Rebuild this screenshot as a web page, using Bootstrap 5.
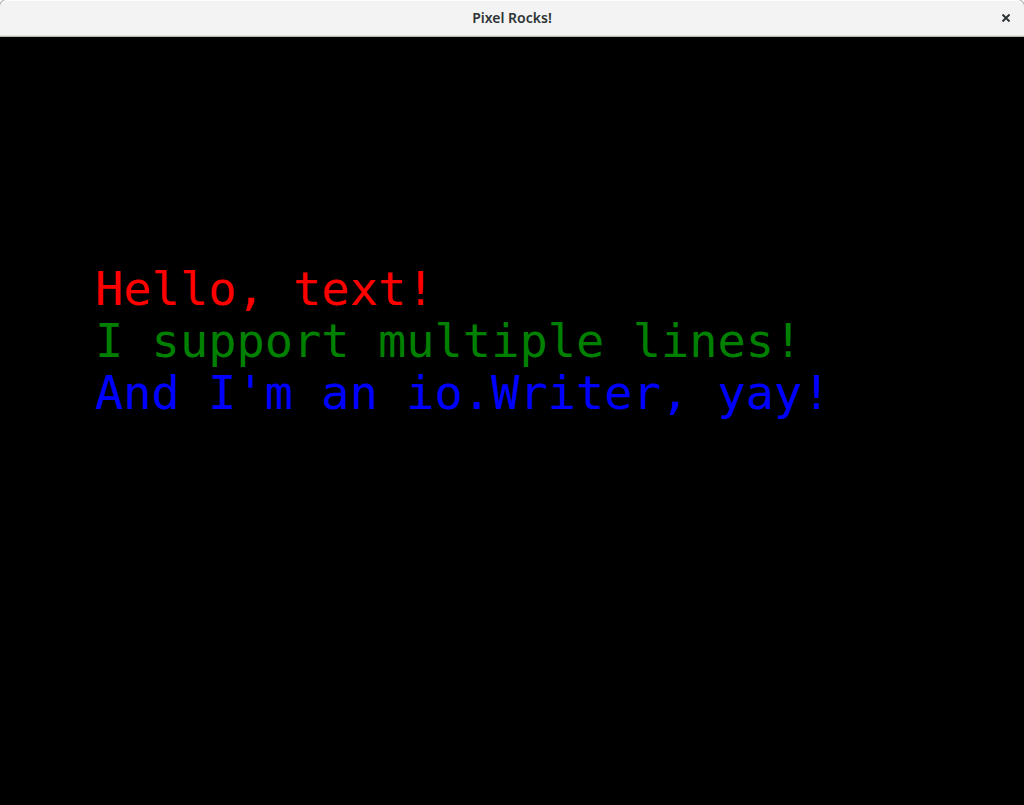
<!DOCTYPE html>
<html lang="en">
<head>
<meta charset="utf-8">
<meta name="viewport" content="width=device-width, initial-scale=1">
<title>Pixel Rocks!</title>
<link rel="stylesheet" href="https://cdn.jsdelivr.net/npm/bootstrap@5.3.0/dist/css/bootstrap.min.css">
<style>
.titlebar { height: 37px; padding: 0 0 2px 36px; background: #f3f3f3; border-radius: 7px 7px 0 0; box-shadow: 0 0 0 1px #aaa, inset 0 1px #fdfdfd, inset 0 -1px #b5b5ae, inset 0 -2px #e4e4e1; }
.window-frame { background: #fff; }
.window-title { font: 600 14px/20px "Noto Sans", "Open Sans", sans-serif; color: #2e3436; }
.close-button { width: 36px; color: #2e3436; }
.canvas { background: #000; padding: 226px 95px 0; }
.pixel-text { font: 47px/52px "DejaVu Sans Mono", monospace; }
.ink-red { color: #f00; }
.ink-green { color: #008000; }
.ink-blue { color: #00f; }
</style>
</head>
<body class="d-flex flex-column min-vh-100 window-frame">
<header class="titlebar d-flex align-items-center">
  <h1 class="window-title flex-grow-1 text-center m-0">Pixel Rocks!</h1>
  <button type="button" class="close-button btn p-0 border-0 d-flex justify-content-center" aria-label="Close">
    <svg width="8" height="8" viewBox="0 0 8 8" stroke="currentColor" stroke-width="2" aria-hidden="true"><path d="M.5.5l7 7M7.500.5l-7 7"/></svg>
  </button>
</header>
<main class="canvas flex-grow-1 overflow-hidden">
  <p class="pixel-text text-nowrap m-0 ink-red">Hello, text!</p>
  <p class="pixel-text text-nowrap m-0 ink-green">I support multiple lines!</p>
  <p class="pixel-text text-nowrap m-0 ink-blue">And I'm an io.Writer, yay!</p>
</main>
<script src="https://cdn.jsdelivr.net/npm/bootstrap@5.3.0/dist/js/bootstrap.bundle.min.js"></script>
</body>
</html>
